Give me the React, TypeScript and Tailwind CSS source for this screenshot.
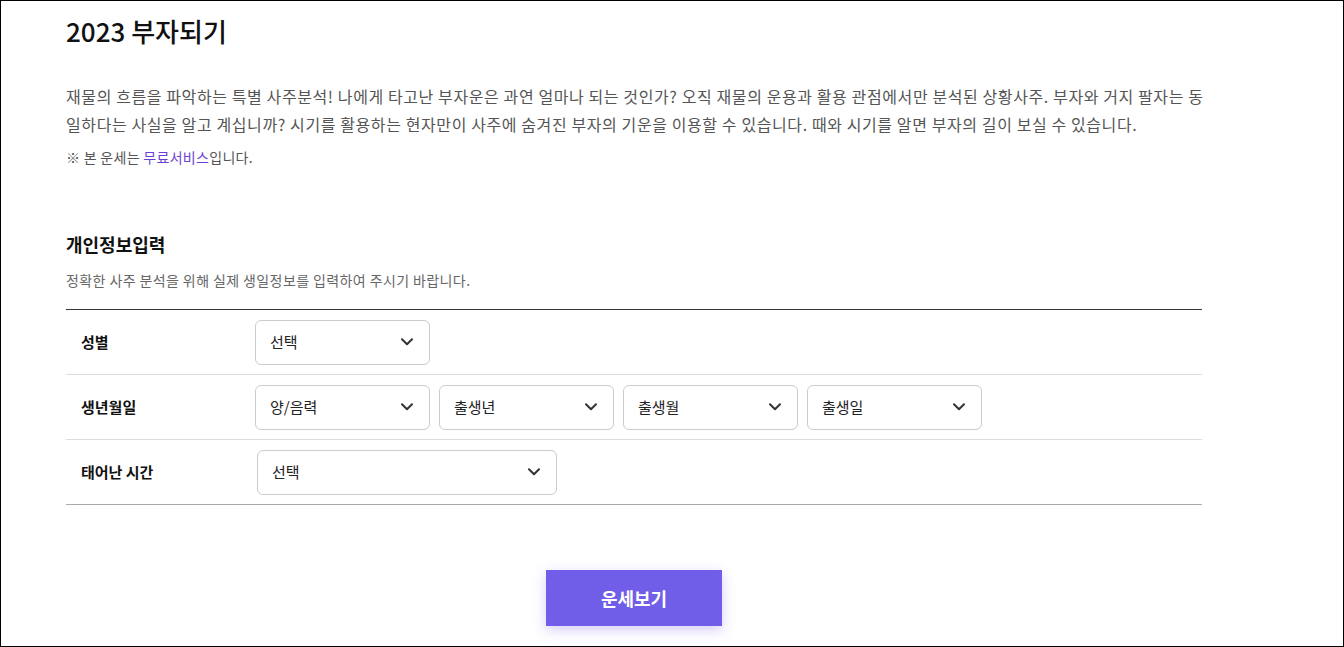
import React from 'react';

const Chevron = () => (
  <svg width="12" height="8" viewBox="0 0 12 8" fill="none" xmlns="http://www.w3.org/2000/svg">
    <path d="M1 1.2l5 5 5-5" stroke="#333" strokeWidth={2} strokeLinecap="round" strokeLinejoin="round" />
  </svg>
);

const SelectBox = ({ label, width }: { label: string; width: string }) => (
  <div
    className={`${width} h-[45px] flex items-center justify-between pl-[14px] pr-[16px] border border-[#cccccc] rounded-[6px] bg-white text-[15px] text-[#222]`}
  >
    <span>{label}</span>
    <Chevron />
  </div>
);

const Row = ({
  label,
  children,
  last,
}: {
  label: string;
  children: React.ReactNode;
  last?: boolean;
}) => (
  <div
    className={`flex items-center h-[65px] border-b ${last ? 'border-[#aaaaaa]' : 'border-[#dddddd]'}`}
  >
    <div className="w-[189px] pl-[15px] text-[15px] font-bold text-[#111]">{label}</div>
    <div className="flex items-center gap-[9px]">{children}</div>
  </div>
);

export default function App() {
  return (
    <div
      className="w-[1344px] h-[647px] border border-black bg-white overflow-hidden"
      style={{ fontFamily: '"Noto Sans CJK KR", "Noto Sans", sans-serif' }}
    >
      <div className="ml-[65px] w-[1136px]">
        <h1 className="pt-[12px] text-[26px] leading-[36px] font-medium text-[#111]">2023 부자되기</h1>

        <div className="mt-[33px] text-[16px] leading-[28px] text-[#555] tracking-[0.6px] whitespace-nowrap">
          <p>
            재물의 흐름을 파악하는 특별 사주분석! 나에게 타고난 부자운은 과연 얼마나 되는 것인가? 오직 재물의 운용과 활용 관점에서만 분석된 상황사주. 부자와 거지 팔자는 동
          </p>
          <p>
            일하다는 사실을 알고 계십니까? 시기를 활용하는 현자만이 사주에 숨겨진 부자의 기운을 이용할 수 있습니다. 때와 시기를 알면 부자의 길이 보실 수 있습니다.
          </p>
        </div>
        <p className="mt-[9px] text-[14px] leading-[20px] text-[#555] tracking-[0.3px]">
          ※ 본 운세는 <span className="text-[#6a3fd6]">무료서비스</span>입니다.
        </p>

        <h2 className="mt-[65px] text-[18px] leading-[24px] font-bold text-[#111]">개인정보입력</h2>
        <p className="mt-[14px] text-[14px] leading-[20px] text-[#666] tracking-[0.4px]">
          정확한 사주 분석을 위해 실제 생일정보를 입력하여 주시기 바랍니다.
        </p>

        <div className="mt-[19px] border-t border-[#333]">
          <Row label="성별">
            <SelectBox label="선택" width="w-[175px]" />
          </Row>
          <Row label="생년월일">
            <SelectBox label="양/음력" width="w-[175px]" />
            <SelectBox label="출생년" width="w-[175px]" />
            <SelectBox label="출생월" width="w-[175px]" />
            <SelectBox label="출생일" width="w-[175px]" />
          </Row>
          <Row label="태어난 시간" last>
            <div className="ml-[2px]">
              <SelectBox label="선택" width="w-[300px]" />
            </div>
          </Row>
        </div>

        <div className="mt-[65px] flex justify-center">
          <button className="w-[176px] h-[56px] bg-[#705ee9] text-white text-[18px] font-bold shadow-[0_4px_12px_rgba(112,94,233,0.3)]">
            운세보기
          </button>
        </div>
      </div>
    </div>
  );
}
